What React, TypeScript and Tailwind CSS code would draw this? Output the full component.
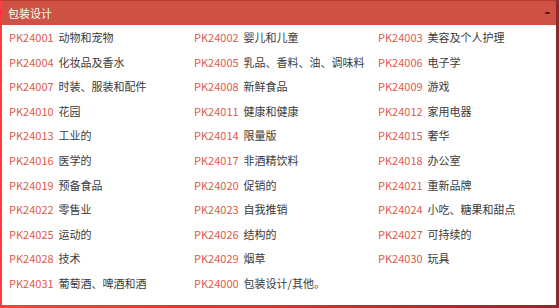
const items: [string, string][] = [
  ['PK24001', '动物和宠物'],
  ['PK24002', '婴儿和儿童'],
  ['PK24003', '美容及个人护理'],
  ['PK24004', '化妆品及香水'],
  ['PK24005', '乳品、香料、油、调味料'],
  ['PK24006', '电子学'],
  ['PK24007', '时装、服装和配件'],
  ['PK24008', '新鲜食品'],
  ['PK24009', '游戏'],
  ['PK24010', '花园'],
  ['PK24011', '健康和健康'],
  ['PK24012', '家用电器'],
  ['PK24013', '工业的'],
  ['PK24014', '限量版'],
  ['PK24015', '奢华'],
  ['PK24016', '医学的'],
  ['PK24017', '非酒精饮料'],
  ['PK24018', '办公室'],
  ['PK24019', '预备食品'],
  ['PK24020', '促销的'],
  ['PK24021', '重新品牌'],
  ['PK24022', '零售业'],
  ['PK24023', '自我推销'],
  ['PK24024', '小吃、糖果和甜点'],
  ['PK24025', '运动的'],
  ['PK24026', '结构的'],
  ['PK24027', '可持续的'],
  ['PK24028', '技术'],
  ['PK24029', '烟草'],
  ['PK24030', '玩具'],
  ['PK24031', '葡萄酒、啤酒和酒'],
  ['PK24000', '包装设计/其他。'],
];

export default function App() {
  return (
    <div
      className="w-[559px] h-[308px] flex flex-col bg-white overflow-hidden border-l-2 border-l-[#ff3d3d] border-r-[3px] border-r-[#8a2a2a] border-t border-t-[#b8382e]"
      style={{ fontFamily: '"Noto Sans CJK SC", "Noto Sans", sans-serif' }}
    >
      {/* Header */}
      <div className="h-[24px] shrink-0 bg-[#cd5144] flex items-center justify-between pl-[6px] pr-[6px]">
        <span className="text-white text-[11px] leading-none">包装设计</span>
        <span className="w-[5px] h-[2px] bg-[#5a1a14] rounded-sm" />
      </div>

      {/* Grid */}
      <div className="flex-1 grid grid-cols-[185px_184px_1fr] auto-rows-[24.6px] pl-[7px]">
        {items.map(([code, name]) => (
          <div key={code} className="flex items-center gap-[5px] text-[11px] whitespace-nowrap">
            <span className="text-[#e05a4c]">{code}</span>
            <span className="text-[#3a3a3a]">{name}</span>
          </div>
        ))}
      </div>

      {/* Bottom edge */}
      <div className="h-[3px] shrink-0 bg-gradient-to-r from-[#ff3d3d] via-[#d23434] to-[#8a2a2a]" />
    </div>
  );
}
